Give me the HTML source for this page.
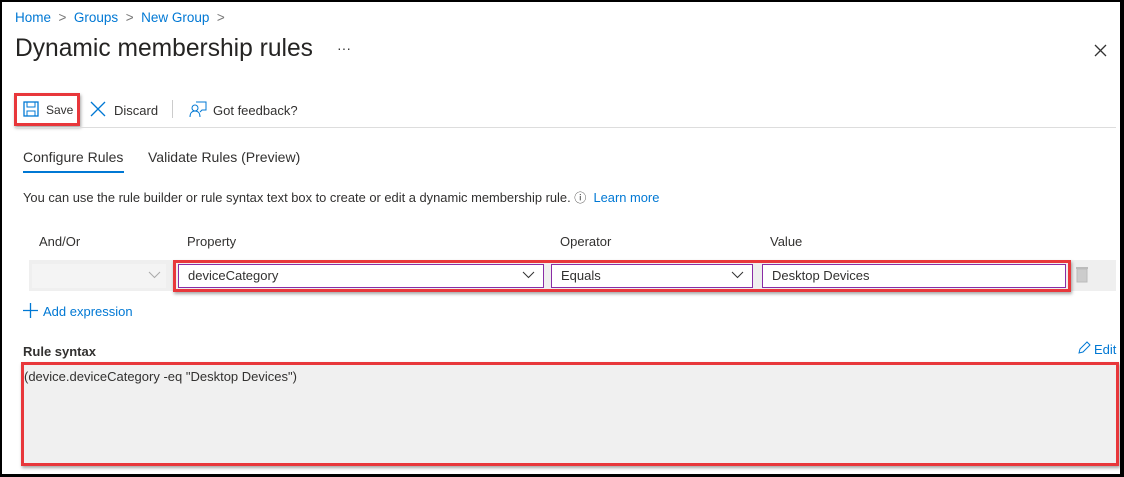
<!DOCTYPE html>
<html><head><style>
body{margin:0;width:1124px;height:477px;background:#000;font-family:"Liberation Sans",sans-serif;overflow:hidden}
.pg{position:absolute;left:2px;top:2px;width:1118px;height:472px;background:#fff}
.a{position:absolute;white-space:nowrap}
.blue{color:#0078d4}
.rb{position:absolute;border:3px solid #e8373b;box-shadow:1px 2px 3px rgba(0,0,0,.35)}
.inp{position:absolute;background:#fff;border:1px solid #8a2da5;box-sizing:border-box;font-size:13px;color:#323130;padding:3px 9px}
</style></head><body><div class="pg"></div>
<div class="a blue" style="left:15px;top:10px;font-size:13.5px">Home <span style="color:#777">&nbsp;&gt;&nbsp;</span> Groups <span style="color:#777">&nbsp;&gt;&nbsp;</span> New Group <span style="color:#777">&nbsp;&gt;</span></div>
<div class="a" style="left:15px;top:35px;font-size:24.6px;color:#252423">Dynamic membership rules</div>
<div class="a" style="left:337px;top:40px;font-size:14px;color:#333">···</div>
<svg class="a" style="left:1094px;top:44px" width="13" height="13"><path d="M1 1L12 12M12 1L1 12" stroke="#333" stroke-width="1.3"/></svg>
<div class="rb" style="left:14px;top:93px;width:60px;height:27px"></div>
<svg class="a" style="left:23px;top:101px" width="16" height="16"><rect x="1" y="1" width="14" height="14" fill="none" stroke="#0078d4" stroke-width="1.3"/><rect x="4" y="1" width="8" height="5" fill="none" stroke="#0078d4"/><rect x="4" y="10" width="8" height="5" fill="none" stroke="#0078d4"/></svg>
<div class="a" style="left:46px;top:103px;font-size:12px;color:#323130">Save</div>
<svg class="a" style="left:90px;top:101px" width="16" height="16"><path d="M1 1L15 15M15 1L1 15" stroke="#0078d4" stroke-width="1.3"/></svg>
<div class="a" style="left:114px;top:103px;font-size:13px;color:#323130">Discard</div>
<div class="a" style="left:172px;top:100px;width:1px;height:18px;background:#ccc"></div>
<svg class="a" style="left:189px;top:100px" width="18" height="18"><circle cx="6" cy="8" r="3" fill="none" stroke="#0078d4"/><path d="M1 17c0-4 2-6 5-6s5 2 5 6M7 2h10v8h-4l-2 2" fill="none" stroke="#0078d4"/></svg>
<div class="a" style="left:213px;top:103px;font-size:13px;color:#323130">Got feedback?</div>
<div class="a" style="left:15px;top:127px;width:1101px;height:1px;background:#ddd"></div>
<div class="a" style="left:23px;top:149px;font-size:14px;color:#323130">Configure Rules</div>
<div class="a" style="left:23px;top:171px;width:101px;height:2px;background:#0078d4"></div>
<div class="a" style="left:148px;top:149px;font-size:14px;color:#323130">Validate Rules (Preview)</div>
<div class="a" style="left:23px;top:189px;font-size:12.9px;color:#323130">You can use the rule builder or rule syntax text box to create or edit a dynamic membership rule. <span style="font-size:12px">ⓘ</span>&nbsp; <span class="blue">Learn more</span></div>
<div class="a" style="left:39px;top:234px;font-size:13px;color:#323130">And/Or</div>
<div class="a" style="left:187px;top:234px;font-size:13px;color:#323130">Property</div>
<div class="a" style="left:560px;top:234px;font-size:13px;color:#323130">Operator</div>
<div class="a" style="left:770px;top:234px;font-size:13px;color:#323130">Value</div>
<div class="a" style="left:29px;top:260px;width:1087px;height:31px;background:#efefef"></div>
<div class="a" style="left:32px;top:264px;width:134px;height:24px;background:#f4f4f4"></div>
<svg class="a" style="left:148px;top:271px" width="13" height="8"><path d="M1 1L6.5 6.5L12 1" fill="none" stroke="#aaa"/></svg>
<div class="rb" style="left:173px;top:260px;width:892px;height:26px"></div>
<div class="inp" style="left:178px;top:264px;width:366px;height:24px">deviceCategory</div>
<svg class="a" style="left:522px;top:271px" width="13" height="8"><path d="M1 1L6.5 6.5L12 1" fill="none" stroke="#333"/></svg>
<div class="inp" style="left:551px;top:264px;width:202px;height:24px">Equals</div>
<svg class="a" style="left:731px;top:271px" width="13" height="8"><path d="M1 1L6.5 6.5L12 1" fill="none" stroke="#333"/></svg>
<div class="inp" style="left:762px;top:264px;width:304px;height:24px">Desktop Devices</div>
<svg class="a" style="left:1076px;top:266px" width="12" height="17"><rect x="1" y="3" width="10" height="13" fill="#ccc" stroke="#bbb"/><rect x="0" y="1" width="12" height="2" fill="#bbb"/></svg>
<svg class="a" style="left:23px;top:303px" width="15" height="15"><path d="M7.5 0V15M0 7.5H15" stroke="#0078d4" stroke-width="1.3"/></svg>
<div class="a blue" style="left:43px;top:304px;font-size:13px">Add expression</div>
<div class="a" style="left:23px;top:344px;font-size:13px;font-weight:bold;color:#323130">Rule syntax</div>
<svg class="a" style="left:1078px;top:341px" width="13" height="13"><path d="M1 12L2 8L9 1L12 4L5 11Z" fill="none" stroke="#0078d4"/></svg>
<div class="a blue" style="left:1094px;top:342px;font-size:13px">Edit</div>
<div class="rb" style="left:21px;top:362px;width:1092px;height:98px;background:#f0f0f0"></div>
<div class="a" style="left:24px;top:369px;font-size:13px;color:#323130">(device.deviceCategory -eq "Desktop Devices")</div>
</body></html>
